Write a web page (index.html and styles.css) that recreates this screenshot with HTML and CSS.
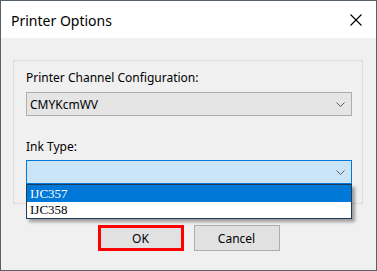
FILE: index.html
```html
<!DOCTYPE html>
<html lang="en">
<head>
    <meta charset="UTF-8">
    <title>Printer Options</title>
    <link rel="stylesheet" href="styles.css">
</head>
<body>
    <div class="window">
        <div class="title-bar">
            <span class="title">Printer Options</span>
            <svg class="close" width="12" height="12" viewBox="0 0 12 12">
                <path d="M0.5 0.5 L11.5 11.5 M11.5 0.5 L0.5 11.5" stroke="#000" stroke-width="1.1" fill="none"/>
            </svg>
        </div>

        <div class="content">
            <div class="group">
                <div class="label">Printer Channel Configuration:</div>
                <div class="combo">
                    <span class="combo-text">CMYKcmWV</span>
                    <svg class="chevron" width="9" height="5" viewBox="0 0 9 5">
                        <path d="M0.5 0.5 L4.5 4.5 L8.5 0.5" stroke="#5a5a5a" fill="none"/>
                    </svg>
                </div>

                <div class="label label-ink">Ink Type:</div>
                <div class="combo combo-open">
                    <span class="combo-text"></span>
                    <svg class="chevron" width="9" height="5" viewBox="0 0 9 5">
                        <path d="M0.5 0.5 L4.5 4.5 L8.5 0.5" stroke="#5a5a5a" fill="none"/>
                    </svg>
                    <div class="dropdown">
                        <div class="option selected">IJC357</div>
                        <div class="option">IJC358</div>
                    </div>
                </div>
            </div>

            <div class="buttons">
                <button class="btn btn-ok">OK</button>
                <button class="btn">Cancel</button>
            </div>
        </div>
    </div>
</body>
</html>
```

FILE: styles.css
```css
* {
    margin: 0;
    padding: 0;
    box-sizing: border-box;
}

body {
    font-family: 'Segoe UI', 'Noto Sans', sans-serif;
    font-size: 12px;
    color: #000;
    background: #fff;
}

.window {
    width: 377px;
    height: 271px;
    border: 1px solid #56616b;
    display: flex;
    flex-direction: column;
}

.title-bar {
    height: 37px;
    background: #fff;
    display: flex;
    align-items: center;
    justify-content: space-between;
    padding: 0 14px 0 10px;
}

.title {
    font-size: 14px;
    margin-top: 1px;
}

.close {
    display: block;
    margin-top: 1px;
}

.content {
    flex: 1;
    background: #f0f0f0;
    padding-top: 22px;
}

.group {
    margin-left: 12px;
    width: 350px;
    height: 144px;
    border: 1px solid #dcdcdc;
    padding: 9px 10px 0 12px;
}

.label {
    line-height: 16px;
    margin-bottom: 6px;
}

.label-ink {
    margin-top: 23px;
    margin-bottom: 5px;
}

.combo {
    position: relative;
    height: 24px;
    border: 1px solid #adadad;
    background: #e5e5e5;
    display: flex;
    align-items: center;
    justify-content: space-between;
    padding: 0 6px 0 3px;
}

.combo-open {
    border-color: #0078d7;
    background: #cce4f7;
}

.chevron {
    display: block;
}

.dropdown {
    position: absolute;
    left: -1px;
    right: -1px;
    top: 23px;
    border: 1px solid #1f3c56;
    background: #fff;
    box-shadow: 3px 3px 3px rgba(0, 0, 0, 0.35);
    font-family: 'Liberation Serif', serif;
    font-size: 13px;
}

.option {
    height: 16px;
    line-height: 16px;
    padding-left: 3px;
}

.option.selected {
    height: 17px;
    line-height: 17px;
    background: #0078d7;
    color: #fff;
}

.buttons {
    display: flex;
    justify-content: center;
    gap: 10px;
    margin-top: 21px;
}

.btn {
    width: 86px;
    height: 26px;
    font-family: inherit;
    font-size: 12px;
    background: #e1e1e1;
    border: 1px solid #adadad;
    color: #000;
}

.btn-ok {
    border: 3px solid #ff0000;
}
```
